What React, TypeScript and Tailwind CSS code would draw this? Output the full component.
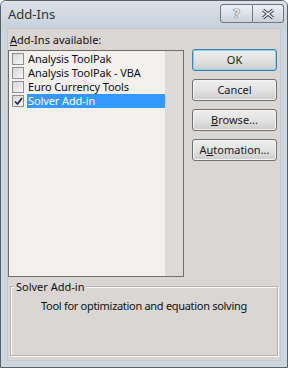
import React, { useState } from 'react';

const addIns = [
  { name: 'Analysis ToolPak', checked: false },
  { name: 'Analysis ToolPak - VBA', checked: false },
  { name: 'Euro Currency Tools', checked: false },
  { name: 'Solver Add-in', checked: true },
];

function CheckBox({ checked }: { checked: boolean }) {
  return (
    <div className="w-[12px] h-[12px] border border-[#8f8f8f] bg-gradient-to-br from-[#d6d6d6] to-[#f8f8f8] flex items-center justify-center shrink-0">
      {checked && (
        <svg width="9" height="9" viewBox="0 0 9 9">
          <path d="M1 4.5 L3.5 7 L8 1" fill="none" stroke="#23234a" strokeWidth="1.7" />
        </svg>
      )}
    </div>
  );
}

function DlgButton({ children, primary }: { children: React.ReactNode; primary?: boolean }) {
  return (
    <button
      className={
        'w-[85px] h-[22px] rounded-[3px] border text-[11px] leading-[14px] text-[#1a1a1a] bg-gradient-to-b from-[#efefef] via-[#e2e2e2] to-[#cdcdcd] ' +
        (primary ? 'border-[#3c7fb1] shadow-[inset_0_0_0_1px_#8fd1f0]' : 'border-[#707070] shadow-[inset_0_0_0_1px_#f4f4f4]')
      }
    >
      {children}
    </button>
  );
}

export default function App() {
  const [selected, setSelected] = useState(3);

  return (
    <div
      className="w-[288px] h-[368px] bg-[#cdd5df] border border-[#5a5f66] rounded-t-[6px] flex flex-col overflow-hidden"
      style={{ fontFamily: '"Noto Sans", "Open Sans", Arial, sans-serif' }}
    >
      {/* title bar */}
      <div className="h-[27px] flex items-start justify-between shrink-0 bg-gradient-to-b from-[#dbe1e9] to-[#c8d1dc]">
        <div className="pl-[7px] pt-[5px] text-[13px] text-[#333333] leading-[17px]">Add-Ins</div>
        <div className="flex pt-[3px] pr-[3px]">
          <div className="w-[33px] h-[19px] border border-[#6f7680] rounded-l-[3px] bg-gradient-to-b from-[#eef1f5] to-[#cbd2db] flex items-center justify-center text-[13px] font-bold text-[#f4f4f4] [text-shadow:0_0_1px_#333,0_0_1px_#333]">
            ?
          </div>
          <div className="w-[31px] h-[19px] border border-l-0 border-[#6f7680] rounded-r-[3px] bg-gradient-to-b from-[#eef1f5] to-[#cbd2db] flex items-center justify-center">
            <svg width="14" height="10" viewBox="0 0 14 10">
              <path d="M2 1 L12 9 M12 1 L2 9" stroke="#3a3f46" strokeWidth="3.4" />
              <path d="M2 1 L12 9 M12 1 L2 9" stroke="#f3f3f3" strokeWidth="1.6" />
            </svg>
          </div>
        </div>
      </div>

      {/* client area */}
      <div className="flex-1 mx-[6px] mb-[6px] bg-[#d9d6d3] border border-[#c4c7cc] flex flex-col">
        <div className="pl-[2px] pt-[3px] text-[11px] leading-[15px] text-[#111]">
          <span className="underline">A</span>dd-Ins available:
        </div>

        <div className="flex mt-[3px]">
          {/* list box */}
          <div className="w-[176px] h-[227px] border border-[#6e6e6e] flex">
            <div className="w-[156px] bg-[#f2f1ef] pt-[1px] flex flex-col">
              {addIns.map((a, i) => (
                <div key={a.name} className="flex items-center h-[14px] pl-[3px]" onClick={() => setSelected(i)}>
                  <CheckBox checked={a.checked} />
                  <div
                    className={
                      'flex-1 h-[14px] ml-[3px] pl-[1px] text-[11px] leading-[14px] tracking-[-0.1px] whitespace-nowrap ' +
                      (selected === i ? 'bg-[#3399ff] text-white' : 'text-[#111]')
                    }
                  >
                    {a.name}
                  </div>
                </div>
              ))}
            </div>
            <div className="flex-1 bg-[#dddad7]" />
          </div>

          {/* buttons */}
          <div className="ml-[8px] flex flex-col gap-[8px] -mt-[1px]">
            <DlgButton primary>OK</DlgButton>
            <DlgButton>Cancel</DlgButton>
            <DlgButton>
              <span className="underline">B</span>rowse...
            </DlgButton>
            <DlgButton>
              A<span className="underline">u</span>tomation...
            </DlgButton>
          </div>
        </div>

        {/* description group */}
        <div className="relative mt-[9px] mx-[2px] h-[70px] border border-[#b5b5b5] shadow-[1px_1px_0_#f8f8f8,inset_1px_1px_0_#f8f8f8]">
          <div className="absolute -top-[8px] left-[3px] px-[2px] bg-[#d9d6d3] text-[11px] leading-[15px] text-[#111]">
            Solver Add-in
          </div>
          <div className="pt-[11px] text-center text-[11px] leading-[15px] tracking-[-0.3px] text-[#111]">
            Tool for optimization and equation solving
          </div>
        </div>
      </div>
    </div>
  );
}
